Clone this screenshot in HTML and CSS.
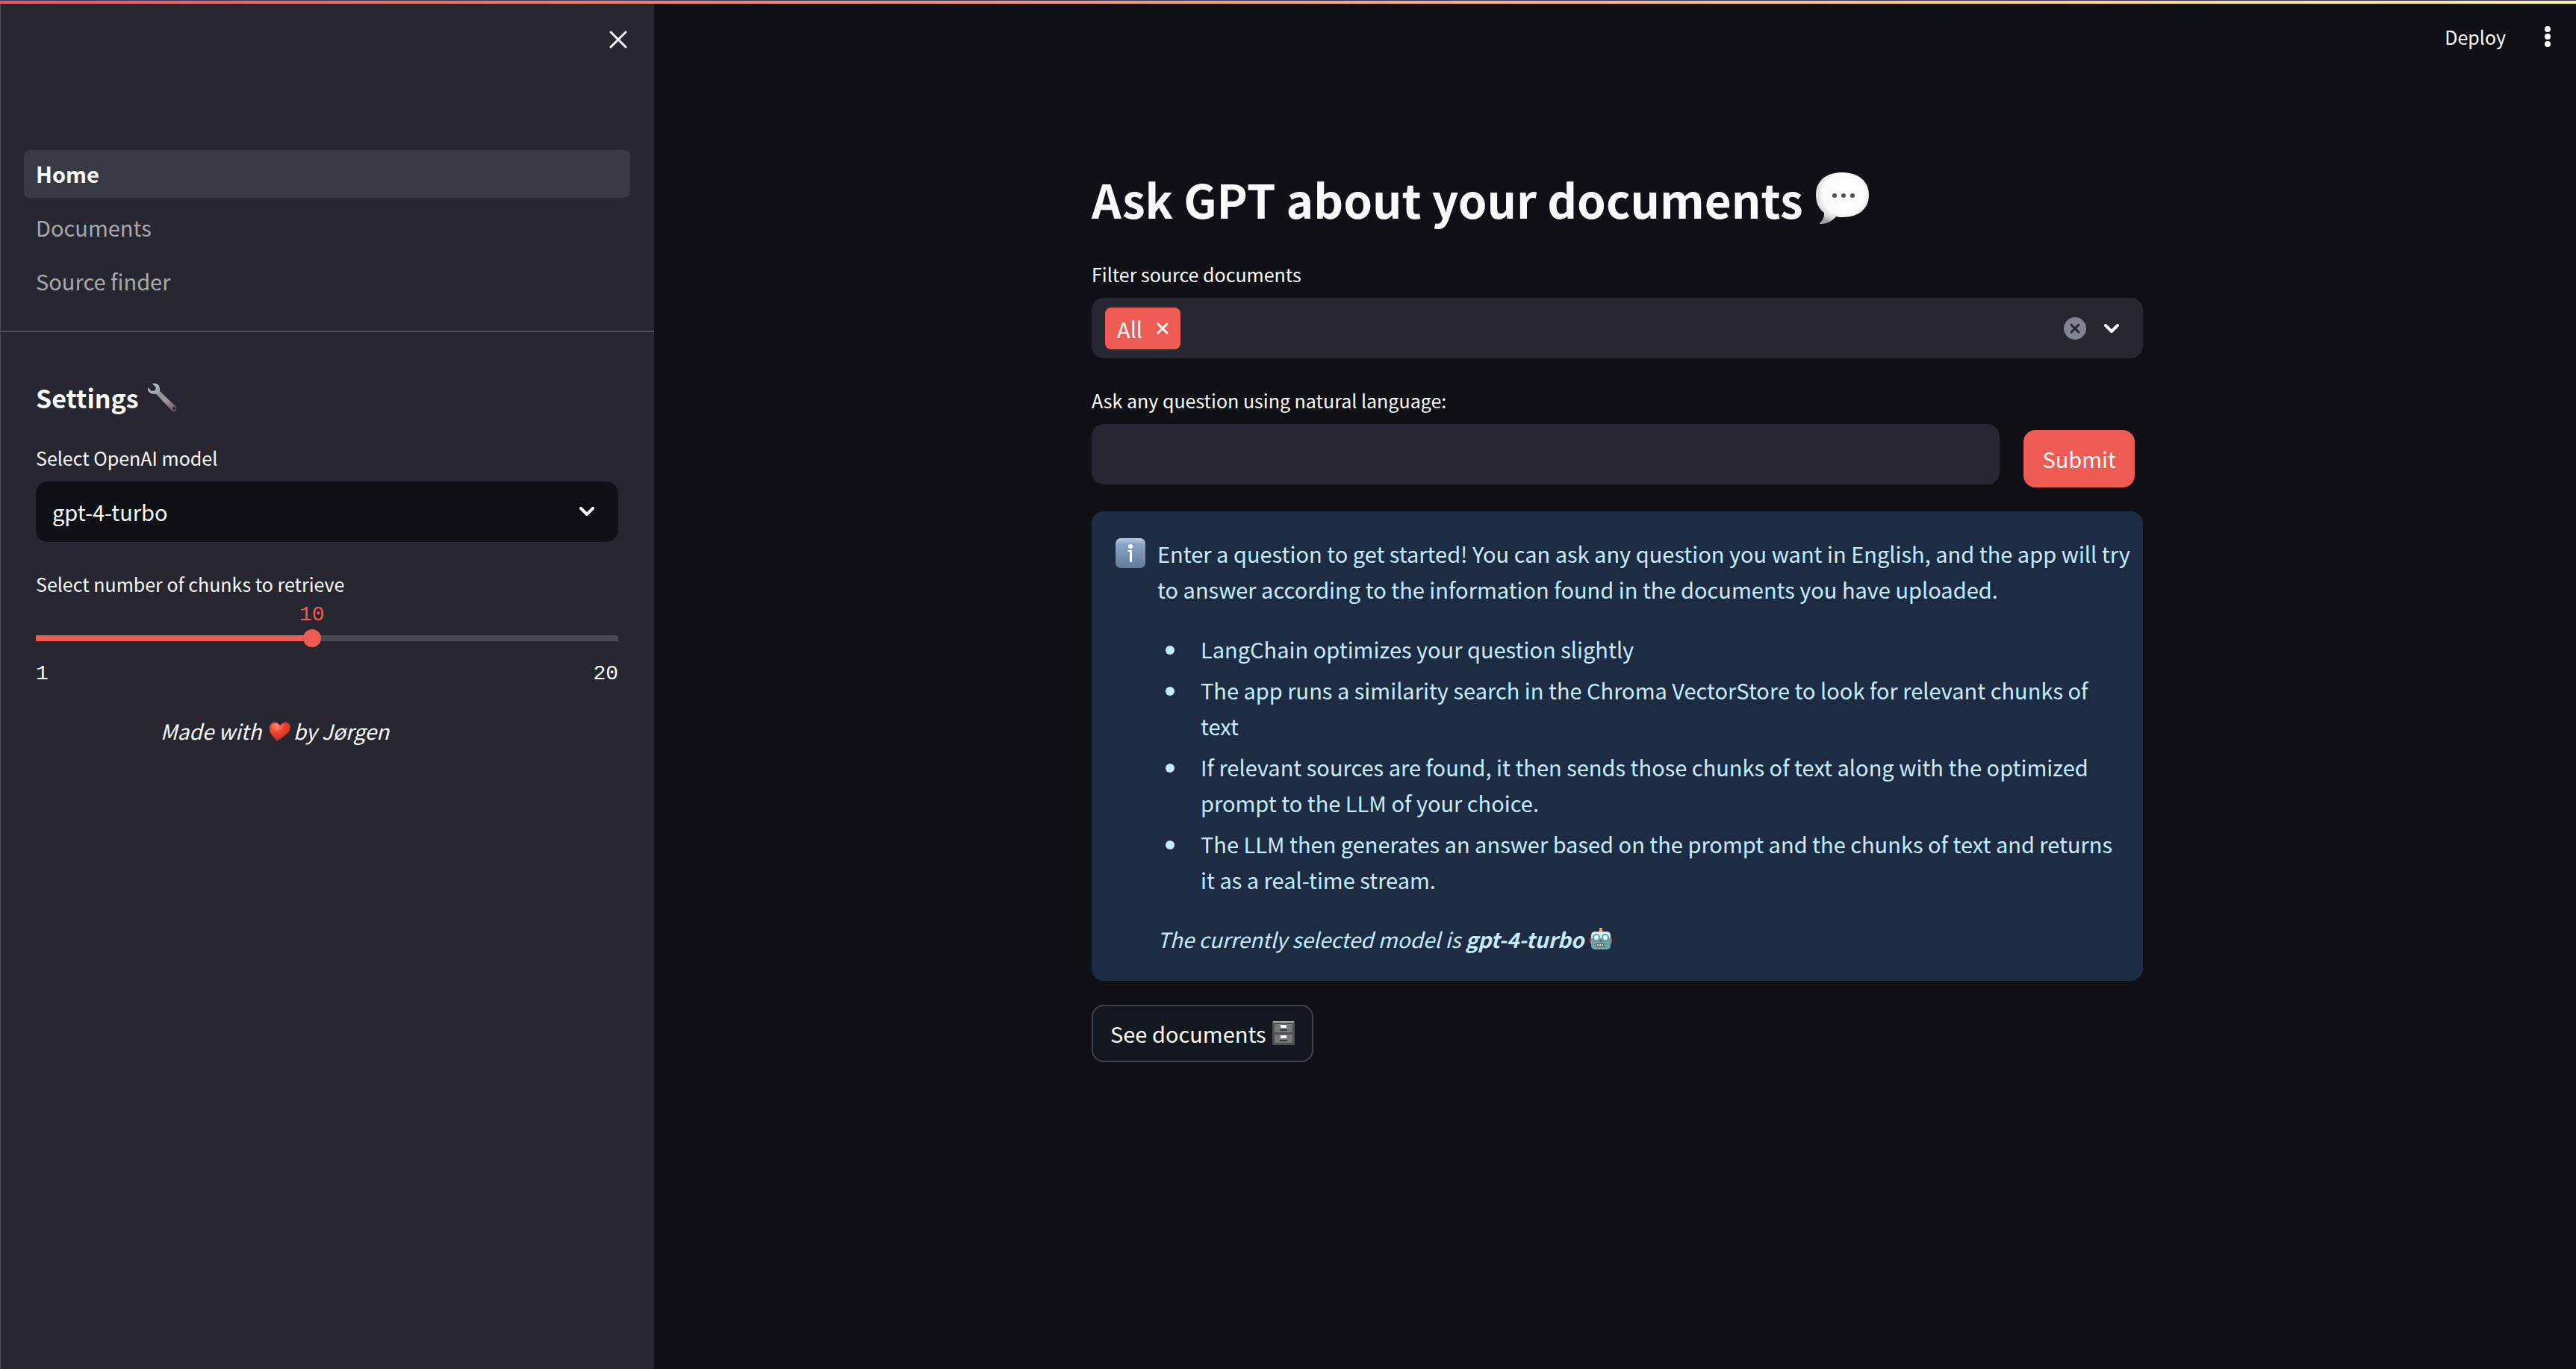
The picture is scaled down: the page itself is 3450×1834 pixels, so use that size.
FILE: index.html
```html
<!DOCTYPE html>
<html lang="en">
<head>
<meta charset="utf-8">
<title>Ask GPT about your documents</title>
<link rel="stylesheet" href="styles.css">
</head>
<body>
<div class="decoration"></div>
<div class="app">
  <aside class="sidebar">
    <div class="sidebar-header">
      <button class="icon-button" type="button" aria-label="Close sidebar">
        <svg width="24" height="24" viewBox="0 0 24 24" fill="none" stroke="currentColor" stroke-width="3" stroke-linecap="round"><path d="M2 2 22 22M22 2 2 22"/></svg>
      </button>
    </div>
    <nav class="pages">
      <a class="page-link active" href="#home">Home</a>
      <a class="page-link" href="#documents">Documents</a>
      <a class="page-link" href="#source-finder">Source finder</a>
    </nav>
    <div class="settings">
      <h2 class="settings-title">Settings
        <svg class="wrench" viewBox="5 9 42 40"><defs><linearGradient id="steel" gradientUnits="userSpaceOnUse" x1="16" y1="14" x2="42" y2="46"><stop offset="0" stop-color="#b4bdc6"/><stop offset=".3" stop-color="#8d949c"/><stop offset=".6" stop-color="#a0959a"/><stop offset="1" stop-color="#62565a"/></linearGradient></defs><path fill="url(#steel)" d="M7 15l5 5 5-1 1-4-5-5c4-2 10 1 10 7 0 2 0 3 1 4l20 19c4 4-1 10-5 6L20 26c-1-2-2-2-4-2-6 0-10-4-9-9z"/><circle cx="42" cy="43" r="2" fill="#2a2527"/></svg>
      </h2>
      <div class="field">
        <label class="label" for="model">Select OpenAI model</label>
        <div class="select-wrap">
          <select class="select" id="model"><option>gpt-4-turbo</option></select>
          <svg class="chevron select-chevron" viewBox="0 0 20 12"><path d="M2 2l8 8 8-8"/></svg>
        </div>
      </div>
      <div class="field slider-field">
        <label class="label" for="chunks">Select number of chunks to retrieve</label>
        <div class="slider">
          <output class="slider-value" for="chunks" style="margin-left:47.4%">10</output>
          <input class="range" id="chunks" type="range" min="1" max="20" value="10">
          <div class="slider-limits"><span>1</span><span>20</span></div>
        </div>
      </div>
      <p class="credit">Made with <svg class="heart" viewBox="0 0 30 28"><defs><radialGradient id="red" cx=".35" cy=".2" r=".8"><stop offset="0" stop-color="#ff8a70"/><stop offset=".4" stop-color="#ee4a34"/><stop offset="1" stop-color="#c3281b"/></radialGradient></defs><path fill="url(#red)" d="M11 27C5 20 0 15 1 8c1-7 10-9 14-2 4-7 14-5 14 2 0 8-10 13-18 19z"/></svg> by Jørgen</p>
    </div>
  </aside>

  <div class="content">
    <header class="toolbar">
      <button class="deploy" type="button">Deploy</button>
      <button class="icon-button" type="button" aria-label="Main menu">
        <svg width="8" height="28" viewBox="0 0 8 28" fill="currentColor"><circle cx="4" cy="4" r="4"/><circle cx="4" cy="14" r="4"/><circle cx="4" cy="24" r="4"/></svg>
      </button>
    </header>
    <main class="block">
      <h1 class="title">Ask GPT about your documents
        <svg class="bubble" viewBox="0 0 72 72"><defs><radialGradient id="pearl" cx=".53" cy=".42" r=".62"><stop offset="0" stop-color="#fff"/><stop offset=".65" stop-color="#fafafa"/><stop offset=".85" stop-color="#d8d8d8"/><stop offset="1" stop-color="#a0a0a0"/></radialGradient></defs><path fill="url(#pearl)" d="M36 1C57 1 72 12 72 31S58 61 37 61c-3 0-6 0-9-1-5 6-12 10-20 10-2 0-2-1-1-2 4-4 5-8 5-13C5 50 1 42 1 31 1 12 15 1 36 1z"/><g fill="#505050"><circle cx="26" cy="32" r="3"/><circle cx="38" cy="32" r="3"/><circle cx="50" cy="32" r="3"/></g></svg>
      </h1>
      <div class="field">
        <label class="label" for="sources">Filter source documents</label>
        <div class="multiselect">
          <span class="tag">All
            <button class="tag-remove" type="button" aria-label="Remove All"><svg width="16" height="16" viewBox="0 0 16 16" fill="none" stroke="currentColor" stroke-width="3" stroke-linecap="round"><path d="M2 2 14 14M14 2 2 14"/></svg></button>
          </span>
          <input class="multiselect-input" id="sources" type="text">
          <button class="icon-button" type="button" aria-label="Clear all"><svg width="30" height="30" viewBox="0 0 30 30"><circle cx="15" cy="15" r="15" fill="#808495"/><path d="M10 10 20 20M20 10 10 20" stroke="#262730" stroke-width="3" stroke-linecap="round"/></svg></button>
          <button class="icon-button" type="button" aria-label="Open"><svg class="chevron" viewBox="0 0 20 12"><path d="M2 2l8 8 8-8"/></svg></button>
        </div>
      </div>
      <form class="ask">
        <div class="field ask-field">
          <label class="label" for="question">Ask any question using natural language:</label>
          <input class="text-input" id="question" type="text">
        </div>
        <button class="button primary" type="button">Submit</button>
      </form>
      <section class="alert">
        <svg class="info" viewBox="0 0 40 40"><defs><linearGradient id="sky" x1="0" y1="0" x2="0" y2="1"><stop offset="0" stop-color="#c0cfe0"/><stop offset=".2" stop-color="#8aa3c5"/><stop offset="1" stop-color="#647c98"/></linearGradient></defs><rect width="40" height="40" rx="7" fill="url(#sky)"/><g fill="#fff"><circle cx="20" cy="11" r="3"/><path d="M16 16h6v16h-3V18h-3z"/></g></svg>
        <div class="alert-body">
          <p>Enter a question to get started! You can ask any question you want in English, and the app will try to answer according to the information found in the documents you have uploaded.</p>
          <ul class="steps">
            <li>LangChain optimizes your question slightly</li>
            <li>The app runs a similarity search in the Chroma VectorStore to look for relevant chunks of text</li>
            <li>If relevant sources are found, it then sends those chunks of text along with the optimized prompt to the LLM of your choice.</li>
            <li>The LLM then generates an answer based on the prompt and the chunks of text and returns it as a real-time stream.</li>
          </ul>
          <p class="model-note">The currently selected model is <strong>gpt-4-turbo</strong> <svg class="robot" viewBox="0 0 30 30"><path d="M15 1v6" stroke="#e8b14a" stroke-width="4"/><rect x="0" y="14" width="30" height="8" rx="2" fill="#c9463c"/><rect x="2" y="6" width="26" height="24" rx="5" fill="#6fa3aa"/><path d="M2 15v-3c0-4 2-6 6-6h14c4 0 6 2 6 6v3z" fill="#dcebea"/><circle cx="9" cy="14" r="4" fill="#fff" stroke="#42a5bd" stroke-width="2"/><circle cx="21" cy="14" r="4" fill="#fff" stroke="#42a5bd" stroke-width="2"/><path d="M15 15l2 5h-4z" fill="#d5483d"/><path d="M9 22h12v4H9z" fill="#3c4c50"/><path d="M10 24h10" stroke="#e8eeee" stroke-width="2" stroke-dasharray="2 1"/></svg></p>
        </div>
      </section>
      <button class="button secondary" type="button">See documents
        <svg class="cabinet" viewBox="0 0 30 32"><rect width="30" height="32" rx="1" fill="#4d5152"/><path d="M1 1h28" stroke="#a9adae" stroke-width="2"/><rect x="3" y="4" width="24" height="11" fill="#747879"/><rect x="3" y="18" width="24" height="11" fill="#747879"/><path d="M11 7h8M11 21h8" stroke="#fff" stroke-width="4"/><path d="M10 12h10M10 26h10" stroke="#383b3c" stroke-width="2"/></svg>
      </button>
    </main>
  </div>
</div>
</body>
</html>
```
FILE: styles.css
```css
* { box-sizing: border-box; }

body {
  margin: 0;
  background: #0f1116;
  color: #fafafa;
  font-family: "Noto Sans CJK SC", "Noto Sans", sans-serif;
  font-size: 29px;
  line-height: 48px;
}

h1, h2, p, ul { margin: 0; }

button, input, select {
  font: inherit;
  color: inherit;
  border: 0;
  background: none;
  padding: 0;
}

svg { flex: none; }

.decoration {
  height: 5px;
  border-top: 1px solid #3b3563;
  background: linear-gradient(90deg, #ed5b53, #fff38b);
}

.app {
  display: flex;
  min-height: calc(100vh - 5px);
}

.sidebar {
  flex: none;
  width: 876px;
  background: #262730;
  border-left: 1px solid #4b4c53;
}

.sidebar-header {
  display: flex;
  justify-content: flex-end;
  height: 196px;
  padding: 36px 36px 0 0;
}

.icon-button {
  display: flex;
  align-items: center;
  align-self: flex-start;
}

.pages {
  display: flex;
  flex-direction: column;
  gap: 8px;
  padding: 0 32px 34px 31px;
  border-bottom: 2px solid #515259;
}

.page-link {
  height: 64px;
  padding: 0 16px;
  border-radius: 8px;
  color: #a8a8ac;
  line-height: 62px;
  text-decoration: none;
}

.page-link.active {
  background: #393b44;
  color: #fafafa;
  font-weight: 700;
}

.settings {
  display: flex;
  flex-direction: column;
  gap: 32px;
  padding: 64px 48px 32px 47px;
}

.settings-title {
  display: flex;
  align-items: center;
  gap: 10px;
  font-size: 34px;
  font-weight: 700;
}

.wrench { width: 42px; height: 40px; }

.field {
  display: flex;
  flex-direction: column;
  gap: 8px;
}

.label {
  font-size: 25px;
  line-height: 48px;
}

.select-wrap { position: relative; }

.select {
  appearance: none;
  width: 100%;
  height: 81px;
  padding: 0 22px 2px;
  border-radius: 16px;
  background: #0f1116;
}

.chevron {
  width: 20px;
  height: 12px;
  fill: none;
  stroke: #fafafa;
  stroke-width: 4;
  stroke-linecap: round;
  stroke-linejoin: round;
}

.select-chevron {
  position: absolute;
  right: 32px;
  top: 34px;
  pointer-events: none;
}

.slider-field { gap: 0; }

.slider {
  padding-bottom: 4px;
  font-family: "Liberation Mono", monospace;
  font-size: 28px;
  line-height: 32px;
}

.slider-value {
  display: block;
  width: fit-content;
  padding-top: 2px;
  margin-bottom: 3px;
  transform: translateX(-50%);
  color: #ed5b53;
}

.range {
  appearance: none;
  display: block;
  width: 100%;
  height: 24px;
  margin: 0;
  background: linear-gradient(90deg, #ed5b53 47%, #484954 47%) center / 100% 8px no-repeat;
}

.range::-webkit-slider-thumb {
  appearance: none;
  width: 24px;
  height: 24px;
  border-radius: 50%;
  background: #ed5b53;
}

.slider-limits {
  display: flex;
  justify-content: space-between;
  padding-top: 20px;
}

.credit {
  padding-right: 140px;
  font-size: 28px;
  font-style: italic;
  text-align: center;
}

.heart {
  width: 30px;
  height: 28px;
  margin: 0 -4px 0 4px;
  vertical-align: -3px;
}

.content {
  flex: 1;
  padding-left: 6px;
}

.toolbar {
  display: flex;
  justify-content: flex-end;
  align-items: center;
  gap: 52px;
  height: 88px;
  padding-right: 34px;
}

.toolbar .icon-button { align-self: center; }

.deploy { font-size: 25px; }

.block {
  display: flex;
  flex-direction: column;
  gap: 32px;
  max-width: 1472px;
  margin: 0 auto;
  padding: 128px 32px 64px;
}

.title {
  display: flex;
  align-items: center;
  gap: 16px;
  font-size: 62px;
  font-weight: 700;
  line-height: 90px;
}

.bubble { width: 72px; height: 72px; }

.multiselect {
  display: flex;
  align-items: center;
  gap: 24px;
  height: 81px;
  padding: 0 32px 0 18px;
  border-radius: 16px;
  background: #262730;
}

.multiselect .icon-button { align-self: center; }

.tag {
  display: flex;
  align-items: center;
  gap: 19px;
  height: 56px;
  padding: 0 16px;
  border-radius: 8px;
  background: #ed5b53;
}

.tag-remove { display: flex; }

.multiselect-input { flex: 1; min-width: 0; }

.ask { display: flex; gap: 32px; }

.ask-field { flex: 1; }

.text-input {
  height: 81px;
  padding: 0 24px;
  border-radius: 16px;
  background: #262730;
}

.button {
  display: flex;
  align-items: center;
  align-self: flex-start;
  gap: 8px;
  height: 77px;
  padding: 0 23px 2px;
  border: 2px solid transparent;
  border-radius: 16px;
}

.primary {
  margin: 64px 11px 0 0;
  border-color: #ed5b53;
  background: #ed5b53;
}

.secondary {
  border-color: #41434a;
  background: #131720;
}

.alert {
  display: flex;
  gap: 16px;
  padding: 32px 16px 32px 32px;
  border-radius: 16px;
  background: #1d2c42;
  color: #c7ebff;
}

.info { width: 40px; height: 40px; margin-top: 4px; }

.alert-body {
  display: flex;
  flex-direction: column;
  gap: 32px;
}

.steps {
  display: flex;
  flex-direction: column;
  gap: 7px;
  padding: 0 16px 0 11px;
  list-style: none;
}

.steps li {
  display: grid;
  grid-template-columns: 12px 1fr;
  gap: 35px;
}

.steps li::before {
  content: "";
  height: 12px;
  margin-top: 20px;
  border-radius: 50%;
  background: currentColor;
}

.model-note {
  font-size: 28px;
  font-style: italic;
}

.robot {
  width: 30px;
  height: 30px;
  margin-left: 1px;
  vertical-align: -2px;
}

.cabinet { width: 30px; height: 32px; }
```
